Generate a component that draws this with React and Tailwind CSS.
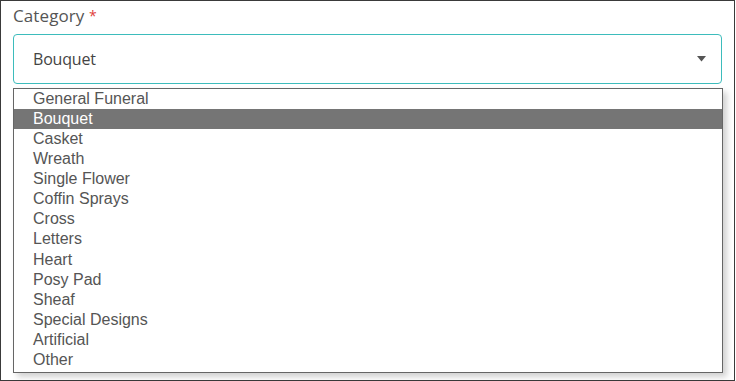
import React from "react";

const items = [
  "General Funeral",
  "Bouquet",
  "Casket",
  "Wreath",
  "Single Flower",
  "Coffin Sprays",
  "Cross",
  "Letters",
  "Heart",
  "Posy Pad",
  "Sheaf",
  "Special Designs",
  "Artificial",
  "Other",
];

export default function App() {
  return (
    <div className="w-[736px] h-[381px] bg-white">
      <div className="w-[735px] h-[381px] border border-[#3a3a3a] bg-white pl-[12px] pr-[13px] pt-[2px]">
        <div className="h-[25px] text-[17px] leading-[25px] text-[#555] font-['Open_Sans',sans-serif] tracking-[0.1px]">
          Category <span className="text-[14px] text-[#e0403a] align-top">*</span>
        </div>
        <div className="relative mt-[6px]">
          <div className="h-[50px] w-[709px] border border-[#3dbcbc] rounded-[4px] flex items-center justify-between pl-[19px] pr-[15px]">
            <span className="text-[16px] text-[#444] font-['Open_Sans',sans-serif] tracking-[-0.2px]">Bouquet</span>
            <svg width="9" height="6" viewBox="0 0 9 6">
              <path d="M0 0 L9 0 L4.5 5.5 Z" fill="#555" />
            </svg>
          </div>
          <div className="absolute left-0 top-[54px] w-[710px] border border-[#666] bg-white pt-0 pb-[2px] shadow-[4px_4px_6px_rgba(0,0,0,0.18)]">
            {items.map((it) => (
              <div
                key={it}
                className={
                  "h-[20.07px] flex items-center pl-[19px] text-[16px] font-['Liberation_Sans',Arial,sans-serif] " +
                  (it === "Bouquet" ? "bg-[#757575] text-white" : "text-[#555]")
                }
              >
                {it}
              </div>
            ))}
          </div>
        </div>
      </div>
    </div>
  );
}
